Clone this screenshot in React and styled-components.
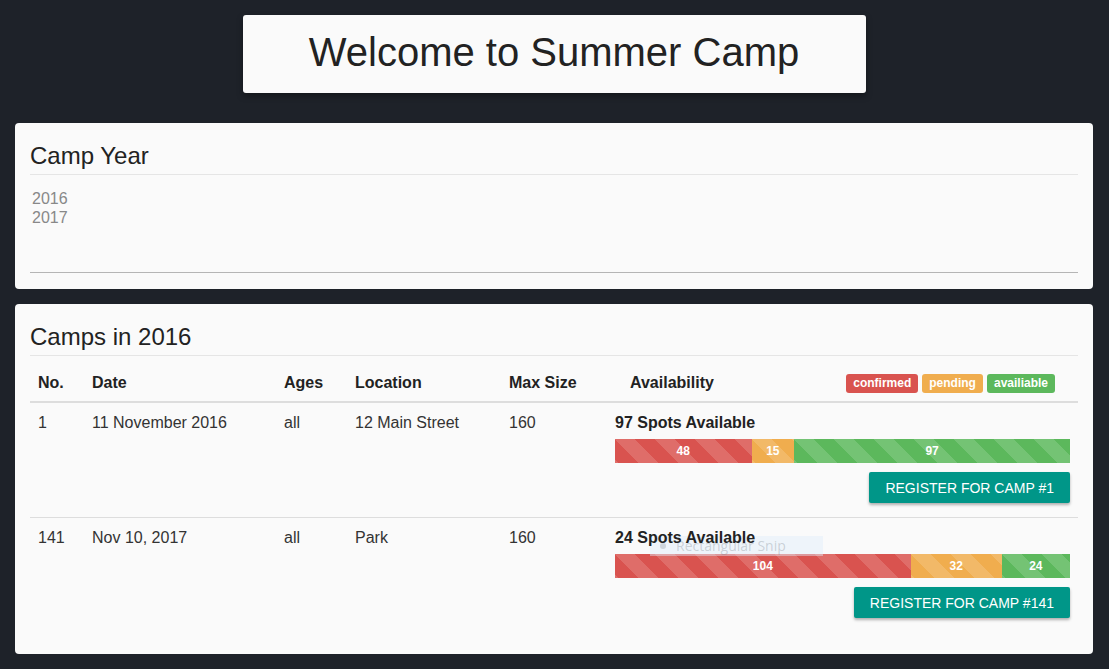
import React from 'react';
import styled, { createGlobalStyle } from 'styled-components';

const GlobalStyle = createGlobalStyle`
  html, body {
    margin: 0;
    padding: 0;
    background: #1e2229;
  }
  body {
    font-family: "Liberation Sans", Arial, sans-serif;
    font-size: 16px;
    color: #333;
  }
  * {
    box-sizing: border-box;
  }
`;

const Page = styled.div`
  display: flex;
  flex-direction: column;
  gap: 15px;
  padding: 15px 16px 15px 15px;
`;

const Header = styled.div`
  align-self: center;
  width: 623px;
  height: 78px;
  margin-bottom: 15px;
  padding-bottom: 4px;
  background: #fafafa;
  border-radius: 3px;
  box-shadow: 0 3px 6px rgba(0, 0, 0, 0.35);
  text-align: center;
  font-size: 40px;
  line-height: 74px;
  color: #222;
`;

const Card = styled.div`
  background: #fafafa;
  border-radius: 4px;
  padding: 15px 15px ${p => p.$bottom || 15}px;
`;

const Title = styled.h2`
  margin: 5px 0 0;
  padding-bottom: 5px;
  font-size: 24px;
  line-height: 26px;
  font-weight: 400;
  color: #222;
  border-bottom: 1px solid #e5e5e5;
`;

const YearList = styled.div`
  height: 98px;
  padding: 14px 2px 0;
  border-bottom: 1px solid #b5b5b5;
  color: #888;
  line-height: 19px;
`;

const Table = styled.table`
  width: 100%;
  margin: 9px 0 7px;
  border-collapse: collapse;
  table-layout: fixed;
`;

const Th = styled.th`
  width: ${p => (p.$w ? `${p.$w}px` : 'auto')};
  padding: 8px;
  text-align: left;
  vertical-align: bottom;
  line-height: 20px;
  font-weight: bold;
  color: #222;
  border-bottom: 2px solid #ddd;
`;

const Td = styled.td`
  padding: 10px 8px 8px;
  vertical-align: top;
  line-height: 20px;
  color: #333;
  border-top: 1px solid #ddd;
`;

const AvailHead = styled.div`
  display: flex;
  align-items: center;
  justify-content: space-between;
  padding: 0 15px;
`;

const Legend = styled.div`
  display: flex;
  gap: 4px;
`;

const Badge = styled.span`
  display: inline-block;
  padding: 3px 7px 4px;
  border-radius: 3px;
  background: ${p => p.$color};
  color: #fff;
  font-size: 12px;
  line-height: 12px;
  font-weight: bold;
`;

const Avail = styled.div`
  position: relative;
  display: flex;
  flex-direction: column;
  margin-top: -2px;
`;

const Spots = styled.div`
  position: relative;
  z-index: 1;
  margin-top: 2px;
  font-weight: bold;
  color: #222;
`;

const Bar = styled.div`
  display: flex;
  height: 24px;
  margin-top: 6px;
  overflow: hidden;
`;

const Segment = styled.div`
  flex: none;
  background-color: ${p => p.$color};
  background-image: linear-gradient(
    45deg,
    rgba(255, 255, 255, 0.15) 25%,
    transparent 25%,
    transparent 50%,
    rgba(255, 255, 255, 0.15) 50%,
    rgba(255, 255, 255, 0.15) 75%,
    transparent 75%,
    transparent
  );
  background-size: 40px 40px;
  color: #fff;
  font-size: 12px;
  font-weight: bold;
  line-height: 24px;
  text-align: center;
  white-space: nowrap;
`;

const RegisterButton = styled.button`
  align-self: flex-end;
  height: 31px;
  margin: 9px 0 6px;
  padding: 0 16px;
  border: none;
  border-radius: 2px;
  background: #009688;
  color: #fff;
  font-family: inherit;
  font-size: 14px;
  text-transform: uppercase;
  box-shadow: 0 2px 3px rgba(0, 0, 0, 0.3);
  cursor: pointer;
`;

/* leftover snipping-tool tooltip that sits over the second row */
const Snip = styled.div`
  position: absolute;
  left: 35px;
  top: 10px;
  width: 173px;
  height: 20px;
  display: flex;
  align-items: center;
  gap: 10px;
  padding-left: 10px;
  background: rgba(225, 238, 250, 0.45);
  color: rgba(110, 120, 130, 0.3);
  font-family: "Open Sans", sans-serif;
  font-size: 14px;
  pointer-events: none;

  &::before {
    content: '';
    width: 6px;
    height: 6px;
    border-radius: 50%;
    background: rgba(110, 120, 130, 0.25);
  }
`;

const COLORS = {
  confirmed: '#d9534f',
  pending: '#f0ad4e',
  available: '#5cb85c'
};

const camps = [
  { id: 1, date: '11 November 2016', ages: 'all', location: '12 Main Street', max: 160, confirmed: 48, pending: 15, available: 97 },
  { id: 141, date: 'Nov 10, 2017', ages: 'all', location: 'Park', max: 160, confirmed: 104, pending: 32, available: 24, snip: true }
];

const pct = (n, max) => ({ width: `${(n / max) * 100}%` });

const App = () => (
  <>
    <GlobalStyle />
    <Page>
      <Header>Welcome to Summer Camp</Header>

      <Card $bottom={16}>
        <Title>Camp Year</Title>
        <YearList>
          <div>2016</div>
          <div>2017</div>
        </YearList>
      </Card>

      <Card>
        <Title>Camps in 2016</Title>
        <Table>
          <thead>
            <tr>
              <Th $w={54}>No.</Th>
              <Th $w={192}>Date</Th>
              <Th $w={71}>Ages</Th>
              <Th $w={154}>Location</Th>
              <Th $w={106}>Max Size</Th>
              <Th>
                <AvailHead>
                  <span>Availability</span>
                  <Legend>
                    <Badge $color={COLORS.confirmed}>confirmed</Badge>
                    <Badge $color={COLORS.pending}>pending</Badge>
                    <Badge $color={COLORS.available}>availiable</Badge>
                  </Legend>
                </AvailHead>
              </Th>
            </tr>
          </thead>
          <tbody>
            {camps.map(camp => (
              <tr key={camp.id}>
                <Td>{camp.id}</Td>
                <Td>{camp.date}</Td>
                <Td>{camp.ages}</Td>
                <Td>{camp.location}</Td>
                <Td>{camp.max}</Td>
                <Td>
                  <Avail>
                    {camp.snip && <Snip>Rectangular Snip</Snip>}
                    <Spots>{camp.available} Spots Available</Spots>
                    <Bar>
                      <Segment $color={COLORS.confirmed} style={pct(camp.confirmed, camp.max)}>{camp.confirmed}</Segment>
                      <Segment $color={COLORS.pending} style={pct(camp.pending, camp.max)}>{camp.pending}</Segment>
                      <Segment $color={COLORS.available} style={pct(camp.available, camp.max)}>{camp.available}</Segment>
                    </Bar>
                    <RegisterButton>Register for camp #{camp.id}</RegisterButton>
                  </Avail>
                </Td>
              </tr>
            ))}
          </tbody>
        </Table>
      </Card>
    </Page>
  </>
);

export default App;
